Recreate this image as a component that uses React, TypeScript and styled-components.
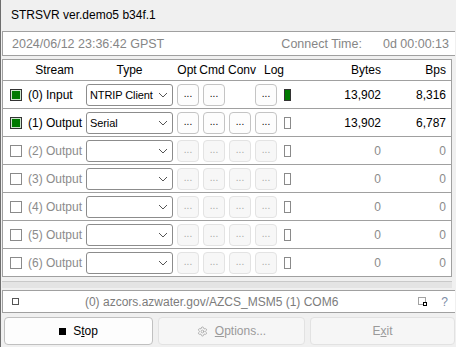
import React from 'react';
import styled, { createGlobalStyle, css } from 'styled-components';
import { Settings } from 'lucide-react';

const GlobalStyle = createGlobalStyle`
  html, body {
    margin: 0;
    padding: 0;
    background: #f0f0f0;
  }
  body {
    font-family: "Liberation Sans", Arial, sans-serif;
    font-size: 12px;
    color: #000;
  }
`;

const Window = styled.div`
  width: 455px;
  height: 347px;
  overflow: hidden;
  border-left: 1px solid #6e6e6e;
  background: #f0f0f0;
  padding-left: 1px;
  box-sizing: border-box;
`;

const TitleBar = styled.div`
  height: 31px;
  line-height: 31px;
  padding-left: 9px;
  font-size: 12px;
`;

const TimePanel = styled.div`
  height: 23px;
  margin-right: -2px;
  background: #fff;
  border-top: 1px solid #a0a0a0;
  border-left: 1px solid #a0a0a0;
  border-bottom: 1px solid #a0a0a0;
  display: flex;
  align-items: center;
  padding: 0 8px 0 9px;
  color: #868686;
  font-size: 12.5px;
`;

const Spacer = styled.div`
  flex: 1;
`;

const ConnectValue = styled.span`
  margin-left: 21px;
`;

const StreamTable = styled.div`
  margin-top: 3px;
  width: 450px;
  box-sizing: border-box;
  border: 1px solid #a0a0a0;
  background: #fff;
`;

const gridCols = css`
  display: grid;
  grid-template-columns: 83px 87px 26px 26px 26px 26px 23px 81px 65px;
  align-items: center;
`;

const HeaderRow = styled.div`
  ${gridCols};
  height: 20px;
  border-bottom: 1px solid #a0a0a0;
`;

const HeadCell = styled.div<{ $align?: string; $shift?: number }>`
  text-align: ${p => p.$align || 'center'};
  padding-left: ${p => p.$shift || 0}px;
  white-space: nowrap;
`;

const Row = styled.div`
  ${gridCols};
  height: 27px;
  & + & {
    border-top: 1px solid #a0a0a0;
  }
`;

const StreamCell = styled.div<{ $on: boolean }>`
  display: flex;
  align-items: center;
  padding-left: 7px;
  color: ${p => (p.$on ? '#000' : '#8b8b8b')};
  white-space: nowrap;
`;

const Check = styled.span<{ $on: boolean }>`
  width: 12px;
  height: 12px;
  box-sizing: border-box;
  margin-right: 6px;
  border: 1px solid ${p => (p.$on ? '#333' : '#8a8a8a')};
  background: ${p => (p.$on ? '#007a00' : '#fff')};
  box-shadow: ${p => (p.$on ? 'inset 0 0 0 1px #cfe6cf' : 'none')};
`;

const Combo = styled.div`
  width: 87px;
  height: 22px;
  box-sizing: border-box;
  border: 1px solid #8c8c8c;
  border-radius: 3px;
  background: #fff;
  display: flex;
  align-items: center;
  padding: 0 4px 0 3px;
`;

const ComboText = styled.span`
  flex: 1;
  white-space: nowrap;
  overflow: hidden;
  font-size: 11px;
  letter-spacing: -0.1px;
`;

const DotButton = styled.div<{ $enabled: boolean }>`
  justify-self: end;
  width: 22px;
  height: 22px;
  box-sizing: border-box;
  border-radius: 4px;
  border: 1px solid ${p => (p.$enabled ? '#c4c4c4' : '#e3e3e3')};
  background: ${p => (p.$enabled ? '#fdfdfd' : '#f7f7f7')};
  color: ${p => (p.$enabled ? '#000' : '#a8a8a8')};
  font-size: 10px;
  display: flex;
  align-items: center;
  justify-content: center;
  padding-bottom: 2px;
`;

const LogCell = styled.div`
  padding-left: 7px;
  display: flex;
  align-items: center;
`;

const Indicator = styled.span<{ $on: boolean }>`
  width: 7px;
  height: 12px;
  box-sizing: border-box;
  border: 1px solid ${p => (p.$on ? '#333' : '#8a8a8a')};
  background: ${p => (p.$on ? '#007a00' : '#fff')};
`;

const Num = styled.div<{ $on: boolean }>`
  text-align: right;
  color: ${p => (p.$on ? '#000' : '#8b8b8b')};
`;

const ScrollStrip = styled.div`
  margin-top: 4px;
  height: 6px;
  width: 450px;
  border-top: 1px solid #c9c9c9;
  background: #e4e4e4;
`;

const StatusBar = styled.div`
  margin-top: 2px;
  height: 21px;
  margin-right: -2px;
  background: #fff;
  border-top: 1px solid #a0a0a0;
  border-bottom: 1px solid #a0a0a0;
  border-left: 1px solid #a0a0a0;
  display: flex;
  align-items: center;
  padding: 0 9px 0 9px;
  color: #7c7c7c;
`;

const TinyBox = styled.span`
  width: 5px;
  height: 5px;
  border: 1px solid #555;
`;

const StatusText = styled.span`
  flex: 1;
  text-align: center;
  padding-right: 14px;
  white-space: nowrap;
`;

const Help = styled.span`
  margin-left: 14px;
  color: #7d8ca6;
`;

const ButtonRow = styled.div`
  margin-top: 4px;
  display: flex;
  gap: 5px;
  padding-left: 2px;
`;

const MainButton = styled.div<{ $enabled: boolean; $w: number }>`
  width: ${p => p.$w}px;
  height: 28px;
  box-sizing: border-box;
  border-radius: 4px;
  border: 1px solid ${p => (p.$enabled ? '#c0c0c0' : '#e2e2e2')};
  background: ${p => (p.$enabled ? '#fdfdfd' : '#f6f6f6')};
  color: ${p => (p.$enabled ? '#000' : '#9a9a9a')};
  display: flex;
  align-items: center;
  justify-content: center;
  gap: 7px;
  u {
    text-decoration-thickness: 1px;
  }
`;

const StopMark = styled.span`
  width: 7px;
  height: 7px;
  background: #000;
`;

type Stream = {
  on: boolean;
  label: string;
  type: string;
  conv: boolean;
  bytes: string;
  bps: string;
};

const streams: Stream[] = [
  { on: true, label: '(0) Input', type: 'NTRIP Client', conv: false, bytes: '13,902', bps: '8,316' },
  { on: true, label: '(1) Output', type: 'Serial', conv: true, bytes: '13,902', bps: '6,787' },
  { on: false, label: '(2) Output', type: '', conv: true, bytes: '0', bps: '0' },
  { on: false, label: '(3) Output', type: '', conv: true, bytes: '0', bps: '0' },
  { on: false, label: '(4) Output', type: '', conv: true, bytes: '0', bps: '0' },
  { on: false, label: '(5) Output', type: '', conv: true, bytes: '0', bps: '0' },
  { on: false, label: '(6) Output', type: '', conv: true, bytes: '0', bps: '0' },
];

const Chevron = () => (
  <svg width="10" height="6" viewBox="0 0 10 6">
    <polyline points="1,1 5,5 9,1" fill="none" stroke="#555" strokeWidth="1" />
  </svg>
);

const DottedIcon = () => (
  <svg width="9" height="9" viewBox="0 0 9 9">
    <rect x="0.5" y="0.5" width="7" height="7" fill="none" stroke="#444" strokeWidth="1" strokeDasharray="1 1" />
    <rect x="5" y="5" width="4" height="4" fill="#000" />
    <rect x="6" y="6" width="2" height="2" fill="#fff" />
  </svg>
);

const App: React.FC = () => {
  return (
    <Window>
      <GlobalStyle />
      <TitleBar>STRSVR ver.demo5 b34f.1</TitleBar>
      <TimePanel>
        <span>2024/06/12 23:36:42 GPST</span>
        <Spacer />
        <span>Connect Time:</span>
        <ConnectValue>0d 00:00:13</ConnectValue>
      </TimePanel>
      <StreamTable>
        <HeaderRow>
          <HeadCell $shift={20}>Stream</HeadCell>
          <HeadCell>Type</HeadCell>
          <HeadCell $shift={2}>Opt</HeadCell>
          <HeadCell>Cmd</HeadCell>
          <HeadCell $shift={3}>Conv</HeadCell>
          <HeadCell $shift={13}>Log</HeadCell>
          <div />
          <HeadCell $align="right">Bytes</HeadCell>
          <HeadCell $align="right">Bps</HeadCell>
        </HeaderRow>
        {streams.map((s, i) => (
          <Row key={i}>
            <StreamCell $on={s.on}>
              <Check $on={s.on} />
              {s.label}
            </StreamCell>
            <Combo>
              <ComboText>{s.type}</ComboText>
              <Chevron />
            </Combo>
            <DotButton $enabled={s.on}>...</DotButton>
            <DotButton $enabled={s.on}>...</DotButton>
            {s.conv ? <DotButton $enabled={s.on}>...</DotButton> : <div />}
            <DotButton $enabled={s.on}>...</DotButton>
            <LogCell>
              <Indicator $on={i === 0} />
            </LogCell>
            <Num $on={s.on}>{s.bytes}</Num>
            <Num $on={s.on}>{s.bps}</Num>
          </Row>
        ))}
      </StreamTable>
      <ScrollStrip />
      <StatusBar>
        <TinyBox />
        <StatusText>(0) azcors.azwater.gov/AZCS_MSM5 (1) COM6</StatusText>
        <DottedIcon />
        <Help>?</Help>
      </StatusBar>
      <ButtonRow>
        <MainButton $enabled $w={150}>
          <StopMark />
          <span>
            S<u>t</u>op
          </span>
        </MainButton>
        <MainButton $enabled={false} $w={148}>
          <Settings size={11} strokeWidth={1.5} />
          <span>
            <u>O</u>ptions...
          </span>
        </MainButton>
        <MainButton $enabled={false} $w={146}>
          <span>
            E<u>x</u>it
          </span>
        </MainButton>
      </ButtonRow>
    </Window>
  );
};

export default App;
